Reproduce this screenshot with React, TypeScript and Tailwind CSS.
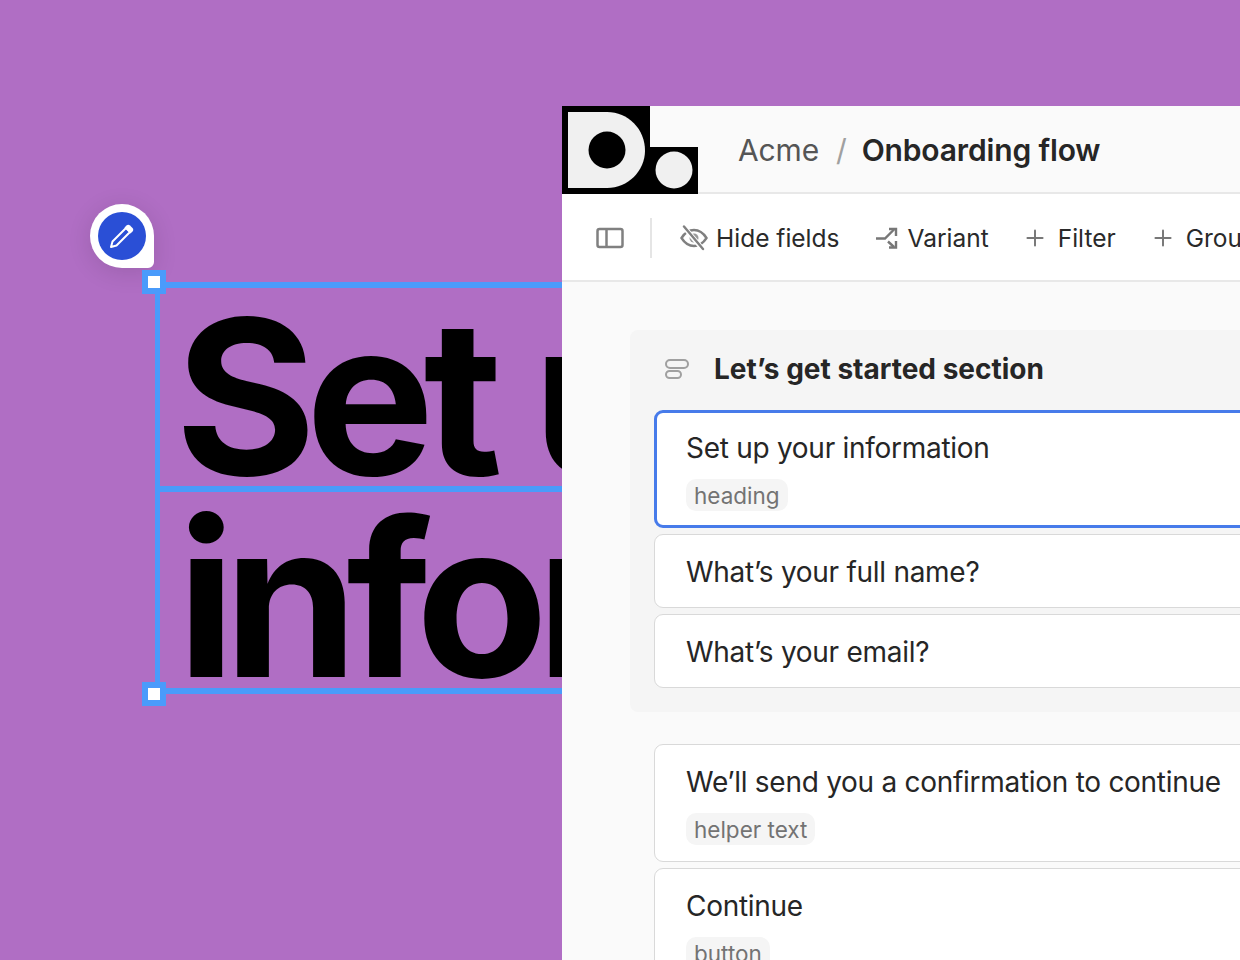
import React from 'react';
import { Plus } from 'lucide-react';

const ui = "font-['Inter',sans-serif]";

const Handle: React.FC<{ className: string }> = ({ className }) => (
  <div className={`absolute w-6 h-6 bg-[#4a9bfb] flex items-center justify-center ${className}`}>
    <div className="w-3 h-3 bg-white" />
  </div>
);

const Logo = () => (
  <svg width="136" height="88" viewBox="0 0 136 88" className="shrink-0 block relative">
    <path d="M0 0H88V41H136V88H0Z" fill="#000" />
    <path d="M6 6H45C66 6 83 23 83 44.500C83 65 66 82 45 82H6Z" fill="#f0f0f0" />
    <circle cx="45" cy="44" r="18.500" fill="#000" />
    <circle cx="112" cy="64" r="18.500" fill="#f0f0f0" />
  </svg>
);

const PanelIcon = () => (
  <svg width="28" height="22" viewBox="0 0 28 22" fill="none" stroke="#808080" strokeWidth="2.500" className="shrink-0">
    <rect x="1.500" y="2" width="25" height="18" rx="2" />
    <path d="M10.500 2V20" />
  </svg>
);

const EyeOffIcon = () => (
  <svg width="28" height="26" viewBox="0 0 28 26" fill="none" stroke="#808080" strokeWidth="2.400" className="shrink-0">
    <path d="M1.500 13C5 7.500 9 5 14 5C19 5 23 7.500 26.500 13C23 18.500 19 21 14 21C9 21 5 18.500 1.500 13Z" />
    <circle cx="14" cy="13" r="4.500" fill="#9a9a9a" stroke="none" />
    <path d="M4 2L23 24.500" stroke="#ffffff" strokeWidth="5" />
    <path d="M4 1.500L23 24" strokeLinecap="round" />
  </svg>
);

const VariantIcon = () => (
  <svg width="22" height="22" viewBox="0 0 22 22" fill="none" stroke="#777777" strokeWidth="2.400" className="shrink-0">
    <path d="M0 11.500H9L18 2.500" />
    <path d="M12 14.500L18 20" />
    <path d="M13 2H20V9" />
    <path d="M20 14V20.500H13" />
  </svg>
);

const SectionIcon = () => (
  <svg width="26" height="22" viewBox="0 0 26 22" fill="none" stroke="#a0a0a0" strokeWidth="2" className="shrink-0">
    <rect x="2" y="2" width="22" height="8" rx="4" />
    <rect x="2" y="13" width="15" height="7" rx="3.500" />
  </svg>
);

const ToolItem: React.FC<{ icon: React.ReactNode; label: string; className?: string }> = ({ icon, label, className }) => (
  <div className={`flex items-center shrink-0 ${className ?? ''}`}>
    {icon}
    <span className="text-[24.500px] leading-none text-[#2a2a2a] whitespace-nowrap">{label}</span>
  </div>
);

const Card: React.FC<{ title: string; tag?: string; active?: boolean; className?: string }> = ({ title, tag, active, className }) => (
  <div className={`w-[720px] rounded-[9px] bg-white shrink-0 ${active ? 'border-[3px] border-[#477bea] pl-[29px] pt-[18px] h-[118px]' : 'border border-[#d9d9d9] pl-[31px] pt-[20px]'} ${className ?? ''}`}>
    <div className="text-[28px] tracking-[-0.01em] leading-[34px] text-[#262626] whitespace-nowrap">{title}</div>
    {tag && (
      <div className="inline-block mt-[14px] rounded-[10px] bg-[#f5f5f5] px-2 h-8 text-[22.500px] leading-[33px] text-[#737373]">{tag}</div>
    )}
  </div>
);

export default function App() {
  return (
    <div className={`w-[1240px] h-[960px] overflow-hidden bg-[#b06ec4] flex ${ui}`}>
      {/* Canvas */}
      <div className="relative w-[562px] h-full shrink-0 overflow-hidden">
        <div className="absolute left-[90px] top-[204px] w-16 h-16 rounded-[32px] rounded-br-[6px] bg-white flex items-center justify-center shadow-[0_4px_24px_rgba(0,0,0,0.12)]">
          <div className="w-12 h-12 rounded-full bg-[#2a4fd6] flex items-center justify-center">
            <svg width="26" height="26" viewBox="0 0 26 26" fill="none" className="block">
              <path d="M2 24L3.500 18.500L17 5L21 9L7.500 22.500Z" stroke="#fff" strokeWidth="2" strokeLinejoin="round" />
              <path d="M17.500 2.500C18.500 1.500 20 1.500 21 2.500L23.500 5C24.500 6 24.500 7.500 23.500 8.500L21.500 10.500L15.500 4.500Z" fill="#fff" />
            </svg>
          </div>
        </div>

        <div className="absolute left-[155px] top-[282px] w-[420px] h-[210px] border-x-[5px] border-y-[6px] border-r-0 border-[#4a9bfb] overflow-hidden">
          <div className="pl-[15px] pt-[13px] text-[216px] leading-[192px] font-bold text-black tracking-[-0.05em] whitespace-nowrap">Set up</div>
        </div>
        <div className="absolute left-[155px] top-[486px] w-[420px] h-[208px] border-x-[5px] border-y-[6px] border-r-0 border-[#4a9bfb] overflow-hidden">
          <div className="pl-[17px] pt-[11px] text-[216px] leading-[192px] font-bold text-black tracking-[-0.055em] whitespace-nowrap">information</div>
        </div>
        <Handle className="left-[142px] top-[270px]" />
        <Handle className="left-[142px] top-[682px]" />
      </div>

      {/* Panel */}
      <div className="flex-1 min-w-0 mt-[106px] bg-[#fafafa] overflow-hidden flex flex-col">
        <div className="h-[88px] shrink-0 flex items-start border-b-2 border-[#e8e8e8]">
          <Logo />
          <div className="ml-10 self-center pt-0.5 flex items-center text-[30px] tracking-[-0.005em] leading-none whitespace-nowrap">
            <span className="text-[#555555]">Acme</span>
            <span className="ml-[17px] mr-[15px] text-[#a0a0a0]">/</span>
            <span className="font-semibold text-[#262626]">Onboarding flow</span>
          </div>
        </div>

        <div className="h-[88px] shrink-0 bg-white border-b-2 border-[#e8e8e8] flex items-center pl-[34px] pt-0.5">
          <PanelIcon />
          <div className="w-0.5 h-10 bg-[#e5e5e5] ml-[26px] mr-7 shrink-0" />
          <ToolItem icon={<EyeOffIcon />} label="Hide fields" className="gap-2" />
          <ToolItem icon={<VariantIcon />} label="Variant" className="gap-[9px] ml-[37px]" />
          <ToolItem icon={<Plus size={26} color="#777777" strokeWidth={1.800} className="shrink-0" />} label="Filter" className="gap-[10px] ml-[33px]" />
          <ToolItem icon={<Plus size={26} color="#777777" strokeWidth={1.800} className="shrink-0" />} label="Group" className="gap-[10px] ml-[34px]" />
        </div>

        <div className="pl-[68px] pt-12 flex flex-col">
          <div className="w-[800px] h-[382px] rounded-l-[8px] bg-[#f5f5f5] pl-6 flex flex-col">
            <div className="h-[80px] shrink-0 flex items-center gap-[24px] pl-[10px] pb-0.5">
              <SectionIcon />
              <span className="text-[28px] leading-none font-bold text-[#262626] whitespace-nowrap">Let’s get started section</span>
            </div>
            <Card active title="Set up your information" tag="heading" />
            <Card title="What’s your full name?" className="h-[74px] mt-[6px]" />
            <Card title="What’s your email?" className="h-[74px] mt-[6px]" />
          </div>
          <div className="pl-6 mt-8 flex flex-col">
            <Card title="We’ll send you a confirmation to continue" tag="helper text" className="h-[118px]" />
            <Card title="Continue" tag="button" className="h-[118px] mt-[6px]" />
          </div>
        </div>
      </div>
    </div>
  );
}
